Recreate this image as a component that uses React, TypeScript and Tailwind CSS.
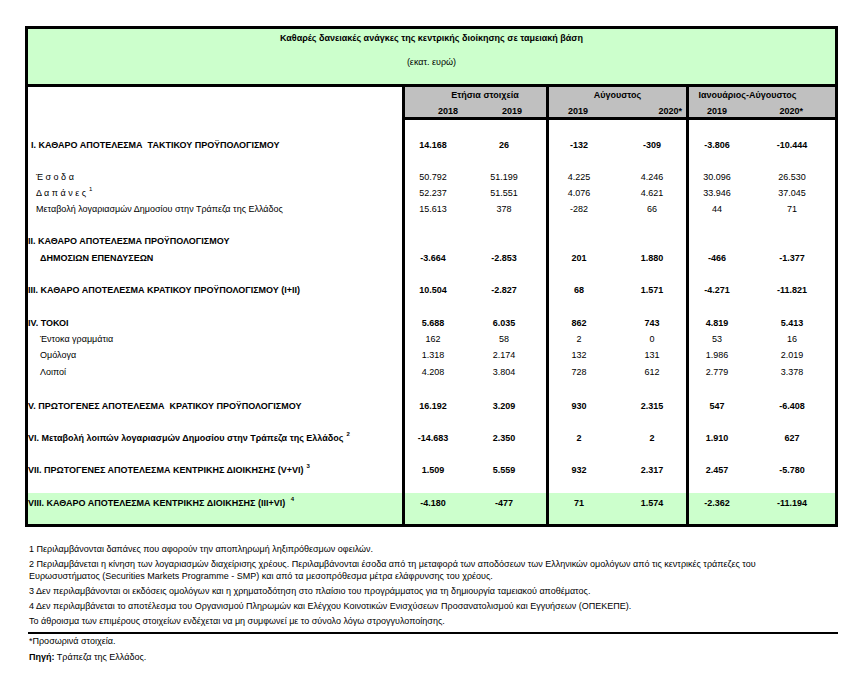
const rows: Row[] = [
  { h: "h-[17px]" },
  { h: "h-[16px]", label: "I. ΚΑΘΑΡΟ ΑΠΟΤΕΛΕΣΜΑ  ΤΑΚΤΙΚΟΥ ΠΡΟΫΠΟΛΟΓΙΣΜΟΥ", pl: "pl-[3px]", bold: true, vals: ["14.168", "26", "-132", "-309", "-3.806", "-10.444"] },
  { h: "h-[16px]" },
  { h: "h-[16px]", label: "Έ σ ο δ α", pl: "pl-[8px]", vals: ["50.792", "51.199", "4.225", "4.246", "30.096", "26.530"] },
  { h: "h-[16px]", label: "Δ α π ά ν ε ς", sup: "1", pl: "pl-[8px]", vals: ["52.237", "51.551", "4.076", "4.621", "33.946", "37.045"] },
  { h: "h-[16px]", label: "Μεταβολή λογαριασμών Δημοσίου στην Τράπεζα της Ελλάδος", pl: "pl-[8px]", vals: ["15.613", "378", "-282", "66", "44", "71"] },
  { h: "h-[16px]" },
  { h: "h-[16px]", label: "II. ΚΑΘΑΡΟ ΑΠΟΤΕΛΕΣΜΑ ΠΡΟΫΠΟΛΟΓΙΣΜΟΥ", pl: "pl-0", bold: true },
  { h: "h-[17px]", label: "ΔΗΜΟΣΙΩΝ ΕΠΕΝΔΥΣΕΩΝ", pl: "pl-[12px]", bold: true, vals: ["-3.664", "-2.853", "201", "1.880", "-466", "-1.377"] },
  { h: "h-[16px]" },
  { h: "h-[16px]", label: "III. ΚΑΘΑΡΟ ΑΠΟΤΕΛΕΣΜΑ ΚΡΑΤΙΚΟΥ ΠΡΟΫΠΟΛΟΓΙΣΜΟΥ (I+II)", pl: "pl-0", bold: true, vals: ["10.504", "-2.827", "68", "1.571", "-4.271", "-11.821"] },
  { h: "h-[17px]" },
  { h: "h-[16px]", label: "IV. ΤΟΚΟΙ", pl: "pl-0", bold: true, vals: ["5.688", "6.035", "862", "743", "4.819", "5.413"] },
  { h: "h-[16px]", label: "Έντοκα γραμμάτια", pl: "pl-[12px]", vals: ["162", "58", "2", "0", "53", "16"] },
  { h: "h-[16px]", label: "Ομόλογα", pl: "pl-[12px]", vals: ["1.318", "2.174", "132", "131", "1.986", "2.019"] },
  { h: "h-[17px]", label: "Λοιποί", pl: "pl-[12px]", vals: ["4.208", "3.804", "728", "612", "2.779", "3.378"] },
  { h: "h-[18px]" },
  { h: "h-[16px]", label: "V. ΠΡΩΤΟΓΕΝΕΣ ΑΠΟΤΕΛΕΣΜΑ  ΚΡΑΤΙΚΟΥ ΠΡΟΫΠΟΛΟΓΙΣΜΟΥ", pl: "pl-0", bold: true, vals: ["16.192", "3.209", "930", "2.315", "547", "-6.408"] },
  { h: "h-[15px]" },
  { h: "h-[17px]", label: "VI. Μεταβολή λοιπών λογαριασμών Δημοσίου στην Τράπεζα της Ελλάδος", sup: "2", pl: "pl-0", bold: true, vals: ["-14.683", "2.350", "2", "2", "1.910", "627"] },
  { h: "h-[16px]" },
  { h: "h-[16px]", label: "VII. ΠΡΩΤΟΓΕΝΕΣ ΑΠΟΤΕΛΕΣΜΑ ΚΕΝΤΡΙΚΗΣ ΔΙΟΙΚΗΣΗΣ (V+VI)", sup: "3", pl: "pl-0", bold: true, vals: ["1.509", "5.559", "932", "2.317", "2.457", "-5.780"] },
  { h: "h-[15px]" },
  { h: "h-[31px]", label: "VIII. ΚΑΘΑΡΟ ΑΠΟΤΕΛΕΣΜΑ ΚΕΝΤΡΙΚΗΣ ΔΙΟΙΚΗΣΗΣ (III+VI) ", sup: "4", pl: "pl-0", bold: true, green: true, vals: ["-4.180", "-477", "71", "1.574", "-2.362", "-11.194"] },
];

type Row = {
  h: string;
  label?: string;
  sup?: string;
  pl?: string;
  bold?: boolean;
  green?: boolean;
  vals?: string[];
};

function Val({ v }: { v?: string }) {
  return <div className="w-[56px] text-center whitespace-nowrap">{v}</div>;
}

function TableRow({ r }: { r: Row }) {
  const bg = r.green ? "bg-[#ccffcc]" : "";
  const align = r.green ? "items-start pt-[2px]" : "items-center";
  const v = r.vals ?? [];
  return (
    <div className={`flex ${r.h} ${bg} ${r.bold ? "font-bold" : ""} leading-[16px]`}>
      <div className={`w-[377px] shrink-0 border-r-[3px] border-black flex ${align} ${r.pl ?? ""} whitespace-pre`}>
        {r.label}
        {r.sup && <span className="text-[6px] relative -top-[4px] ml-[3px]">{r.sup}</span>}
      </div>
      <div className={`w-[144px] shrink-0 border-r-[3px] border-black flex ${align} gap-[15px]`}>
        <Val v={v[0]} />
        <Val v={v[1]} />
      </div>
      <div className={`w-[140px] shrink-0 border-r-[3px] border-black flex ${align} pl-[2px] gap-[17px]`}>
        <Val v={v[2]} />
        <Val v={v[3]} />
      </div>
      <div className={`flex-1 flex ${align} gap-[19px]`}>
        <Val v={v[4]} />
        <Val v={v[5]} />
      </div>
    </div>
  );
}

export default function App() {
  return (
    <div className="w-[863px] h-[680px] bg-white text-black text-[9px] font-['Liberation_Sans',Arial,sans-serif] pt-[26px] pl-[25px]">
      <div className="w-[813px] border-[3px] border-black">
        {/* title */}
        <div className="h-[58px] border-b-[3px] border-black bg-[#ccffcc] flex flex-col items-center pt-[3px]">
          <p className="font-bold leading-[12px]">Καθαρές δανειακές ανάγκες της κεντρικής διοίκησης σε ταμειακή βάση</p>
          <p className="leading-[12px] mt-[12px]">(εκατ. ευρώ)</p>
        </div>

        {/* column heads */}
        <div className="flex h-[33px] font-bold leading-[12px]">
          <div className="w-[377px] shrink-0 border-r-[3px] border-black" />
          <div className="w-[144px] shrink-0 border-r-[3px] border-b-[3px] border-black bg-[#c0c0c0] pt-[2px] flex flex-col gap-[4px]">
            <div className="text-center pl-[19px]">Ετήσια στοιχεία</div>
            <div className="flex justify-between pl-[33px] pr-[24px]">
              <span>2018</span>
              <span>2019</span>
            </div>
          </div>
          <div className="w-[140px] shrink-0 border-r-[3px] border-b-[3px] border-black bg-[#c0c0c0] pt-[2px] flex flex-col gap-[4px]">
            <div className="text-center">Αύγουστος</div>
            <div className="flex justify-between pl-[19px] pr-[4px]">
              <span>2019</span>
              <span>2020*</span>
            </div>
          </div>
          <div className="flex-1 border-b-[3px] border-black bg-[#c0c0c0] pt-[2px] flex flex-col gap-[4px]">
            <div className="text-center pr-[29px]">Ιανουάριος-Αύγουστος</div>
            <div className="flex justify-between pl-[18px] pr-[32px]">
              <span>2019</span>
              <span>2020*</span>
            </div>
          </div>
        </div>

        {rows.map((r, i) => (
          <TableRow key={i} r={r} />
        ))}
      </div>

      {/* notes */}
      <div className="w-[810px] ml-[3px] mt-[16px] leading-[12px]">
        <div className="flex flex-col gap-[3px] pl-[1px]">
          <p>1 Περιλαμβάνονται δαπάνες που αφορούν την αποπληρωμή ληξιπρόθεσμων οφειλών.</p>
          <p className="whitespace-nowrap">
            2 Περιλαμβάνεται η κίνηση των λογαριασμών διαχείρισης χρέους. Περιλαμβάνονται έσοδα από τη μεταφορά των αποδόσεων των Ελληνικών ομολόγων από τις κεντρικές τράπεζες του
            <br />
            Ευρωσυστήματος (Securities Markets Programme - SMP) και από τα μεσοπρόθεσμα μέτρα ελάφρυνσης του χρέους.
          </p>
          <p>3 Δεν περιλαμβάνονται οι εκδόσεις ομολόγων και η χρηματοδότηση στο πλαίσιο του προγράμματος για τη δημιουργία ταμειακού αποθέματος.</p>
          <p>4 Δεν περιλαμβάνεται το αποτέλεσμα του Οργανισμού Πληρωμών και Ελέγχου Κοινοτικών Ενισχύσεων Προσανατολισμού και Εγγυήσεων (ΟΠΕΚΕΠΕ).</p>
          <p>Το άθροισμα των επιμέρους στοιχείων ενδέχεται να μη συμφωνεί με το σύνολο λόγω στρογγυλοποίησης.</p>
        </div>
        <div className="h-[2px] bg-black mt-[5px]" />
        <p className="pl-[1px] mt-[1px]">*Προσωρινά στοιχεία.</p>
        <p className="pl-[1px] mt-[4px]">
          <span className="font-bold">Πηγή:</span> Τράπεζα της Ελλάδος.
        </p>
      </div>
    </div>
  );
}
